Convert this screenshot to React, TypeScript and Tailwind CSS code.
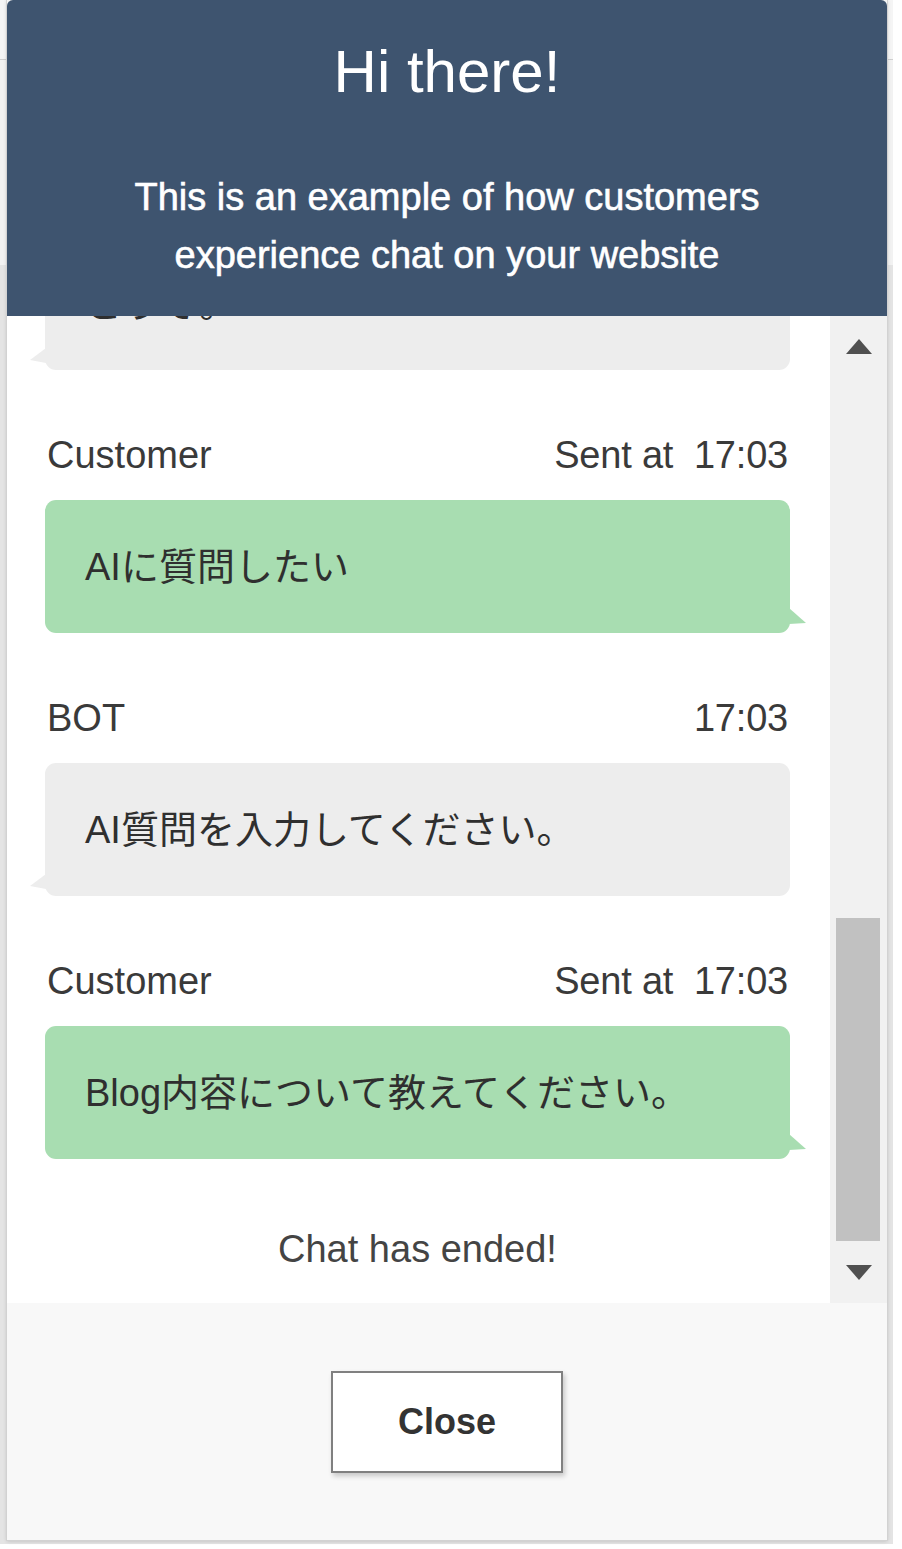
import React from "react";

// 共通フォント
const FONT =
  "font-[family-name:'Liberation_Sans',Arial,'Noto_Sans_CJK_JP',sans-serif]";

type Msg = {
  from: "bot" | "customer";
  name: string;
  time: string;
  text: string;
};

const MESSAGES: Msg[] = [
  { from: "customer", name: "Customer", time: "17:03", text: "AIに質問したい" },
  { from: "bot", name: "BOT", time: "17:03", text: "AI質問を入力してください。" },
  {
    from: "customer",
    name: "Customer",
    time: "17:03",
    text: "Blog内容について教えてください。",
  },
];

// 吹き出し
const Bubble: React.FC<{ from: "bot" | "customer"; text: string; className?: string }> = ({
  from,
  text,
  className = "",
}) => {
  const isBot = from === "bot";
  return (
    <div
      className={`relative flex h-[133px] items-center rounded-[11px] px-[40px] text-[38px] leading-[50px] text-[#2f2f2f] ${
        isBot ? "bg-[#ededed]" : "bg-[#a8ddb1]"
      } ${className}`}
    >
      {text}
      {isBot ? (
        <svg
          className="absolute bottom-[7px] left-[-15px] h-[15px] w-[16px]"
          viewBox="0 0 16 15"
        >
          <polygon points="0,12 16,0 16,15" fill="#ededed" />
        </svg>
      ) : (
        <svg
          className="absolute bottom-[9px] right-[-16px] h-[16px] w-[17px]"
          viewBox="0 0 17 16"
        >
          <polygon points="0,0 17,15 0,16" fill="#a8ddb1" />
        </svg>
      )}
    </div>
  );
};

const MessageRow: React.FC<{ msg: Msg }> = ({ msg }) => (
  <div>
    <div className="mt-[60px] mb-[20px] flex h-[50px] items-center justify-between px-[2px] text-[38px] leading-[50px] text-[#3a3a3a]">
      <span>{msg.name}</span>
      <span className="tracking-[-0.2px]">
        {msg.from === "customer" ? "Sent at\u00a0 " : ""}
        {msg.time}
      </span>
    </div>
    <Bubble from={msg.from} text={msg.text} />
  </div>
);

const ScrollBar: React.FC = () => (
  <div className="flex w-[57px] shrink-0 flex-col bg-[#f1f1f1]">
    <div className="flex h-[60px] items-center justify-center">
      <svg width="26" height="15" viewBox="0 0 26 15">
        <polygon points="13,0 26,15 0,15" fill="#505050" />
      </svg>
    </div>
    <div className="flex flex-1 flex-col justify-end pl-[6px] pr-[7px]">
      <div className="h-[323px] bg-[#c1c1c1]" />
    </div>
    <div className="flex h-[62px] items-center justify-center">
      <svg width="26" height="15" viewBox="0 0 26 15">
        <polygon points="0,0 26,0 13,15" fill="#505050" />
      </svg>
    </div>
  </div>
);

const App: React.FC = () => {
  return (
    <div className={`relative h-[1549px] w-[902px] overflow-hidden bg-white ${FONT}`}>
      {/* 背景ページ */}
      <div className="flex h-[1544px] w-[893px] flex-col">
        <div className="h-[60px] border-b border-[#cfcfcf] bg-[#f5f5f5]" />
        <div className="h-[205px] bg-[#f2f2f2]" />
        <div className="flex-1 bg-[#e4e4e4]" />
      </div>

      {/* チャットウィジェット */}
      <div className="absolute left-[7px] top-0 flex h-[1540px] w-[880px] flex-col shadow-[0_0_0_1px_#d2d2d2,0_1px_4px_rgba(0,0,0,0.2)]">
        {/* ヘッダー */}
        <div className="h-[316px] shrink-0 rounded-t-[6px] bg-[#3e546f] pt-[36px] text-center text-white">
          <div className="text-[60px] leading-[72px]">Hi there!</div>
          <div className="mt-[60px] text-[38px] leading-[58px] [-webkit-text-stroke:0.6px_white]">
            This is an example of how customers
            <br />
            experience chat on your website
          </div>
        </div>

        {/* メッセージ一覧 */}
        <div className="flex h-[987px] shrink-0 bg-white">
          <div className="flex-1 overflow-hidden pl-[38px] pr-[40px]">
            <Bubble from="bot" text="どうぞ。" className="-mt-[79px]" />
            {MESSAGES.map((m, i) => (
              <MessageRow key={i} msg={m} />
            ))}
            <div className="mt-[65px] h-[50px] text-center text-[38px] leading-[50px] text-[#444]">
              Chat has ended!
            </div>
          </div>
          <ScrollBar />
        </div>

        {/* フッター */}
        <div className="flex flex-1 items-center justify-center bg-[#f8f8f8]">
          <button className="flex h-[102px] w-[232px] items-center justify-center border-2 border-[#808080] bg-white text-[36px] font-bold text-[#333] shadow-[2px_3px_5px_rgba(0,0,0,0.2)]">
            Close
          </button>
        </div>
      </div>
    </div>
  );
};

export default App;
